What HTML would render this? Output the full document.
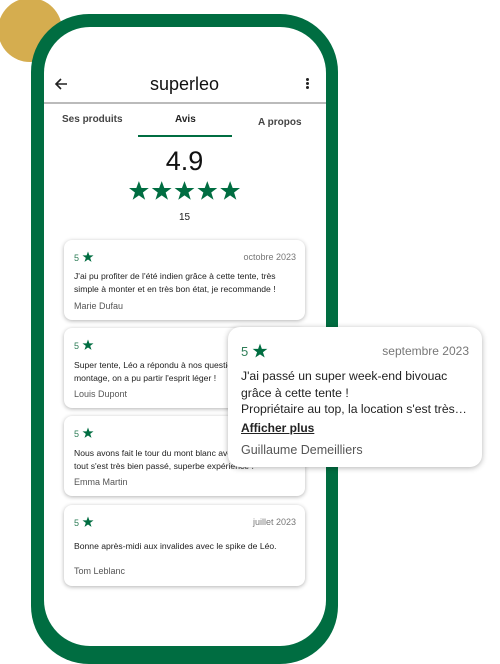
<!DOCTYPE html>
<html><head><meta charset="utf-8"><style>
*{margin:0;padding:0;box-sizing:border-box}
body{width:500px;height:664px;overflow:hidden;background:#fff;font-family:"Liberation Sans",Arial,sans-serif;position:relative}
.a{position:absolute}
.gold{left:-2px;top:-2px;width:64px;height:64px;border-radius:50%;background:#d5ad4f}
.phone{left:31px;top:14px;width:307px;height:650px;border-radius:58px;background:#006d41}
.screen{left:44px;top:27px;width:282px;height:619px;border-radius:46px;background:#fff;overflow:hidden}
.card{background:#fff;border-radius:8px;box-shadow:0 1px 4px rgba(0,0,0,.3);left:64px;width:241px;height:80px}
.r{font-size:9px;color:#2e7d57}
.d{font-size:9px;color:#777;right:9px;top:12px}
.t{font-size:8.6px;color:#222;line-height:13px;left:10px;white-space:nowrap}
.n{font-size:9px;color:#555;left:10px}
svg.s{vertical-align:-2px}
</style></head><body>
<div class="a gold"></div>
<div class="a phone"></div>
<div class="a screen"></div>
<svg class="a" style="left:54px;top:77px" width="14" height="14" viewBox="0 0 14 14"><path d="M13 7H2M7 2L2 7l5 5" stroke="#222" stroke-width="1.6" fill="none"/></svg>
<div class="a" style="left:0;width:369px;text-align:center;top:74px;font-size:18px;color:#111">superleo</div>
<div class="a" style="left:306px;top:78px;width:3px;height:3px;border-radius:50%;background:#222;box-shadow:0 4px 0 #222,0 8px 0 #222"></div>
<div class="a" style="left:44px;top:102px;width:282px;height:2px;background:#bbb"></div>
<div class="a" style="left:62px;top:114px;font-size:10px;font-weight:bold;color:#444">Ses produits</div>
<div class="a" style="left:175px;top:114px;font-size:10px;font-weight:bold;color:#222">Avis</div>
<div class="a" style="left:258px;top:117px;font-size:10px;font-weight:bold;color:#444">A propos</div>
<div class="a" style="left:138px;top:135px;width:94px;height:2px;background:#006d41"></div>
<div class="a" style="left:0;width:369px;text-align:center;top:146px;font-size:27px;color:#111">4.9</div>
<div class="a" style="left:128px;top:180px">
<svg width="114" height="23" viewBox="0 0 115 23"><g fill="#006d41"><path id="st" d="M11 1l2.6 7h7.4l-6 4.5 2.3 7.3L11 15.4 4.7 19.8 7 12.5 1 8h7.4z"/><use href="#st" x="23"/><use href="#st" x="46"/><use href="#st" x="69"/><use href="#st" x="92"/></g></svg></div>
<div class="a" style="left:0;width:369px;text-align:center;top:212px;font-size:10px;color:#222">15</div>

<svg width="0" height="0" style="position:absolute"><defs><path id="ss" d="M6 .5l1.4 3.9h4.1L8.2 6.9l1.3 4L6 8.5 2.5 10.9l1.3-4L.5 4.4h4.1z"/></defs></svg>

<div class="a card" style="top:240px;height:80px">
<div class="a r" style="left:10px;top:11px">5 <svg class="s" width="12" height="12"><use href="#ss" fill="#006d41"/></svg></div>
<div class="a d">octobre 2023</div>
<div class="a t" style="top:30px">J'ai pu profiter de l'été indien grâce à cette tente, très<br>simple à monter et en très bon état, je recommande !</div>
<div class="a n" style="top:61px">Marie Dufau</div></div>

<div class="a card" style="top:328px;height:80px">
<div class="a r" style="left:10px;top:11px">5 <svg class="s" width="12" height="12"><use href="#ss" fill="#006d41"/></svg></div>
<div class="a t" style="top:31px">Super tente, Léo a répondu à nos questions sur le<br>montage, on a pu partir l'esprit léger !</div>
<div class="a n" style="top:61px">Louis Dupont</div></div>

<div class="a card" style="top:416px;height:80px">
<div class="a r" style="left:10px;top:11px">5 <svg class="s" width="12" height="12"><use href="#ss" fill="#006d41"/></svg></div>
<div class="a t" style="top:31px">Nous avons fait le tour du mont blanc avec cette tente,<br>tout s'est très bien passé, superbe expérience !</div>
<div class="a n" style="top:61px">Emma Martin</div></div>

<div class="a card" style="top:505px;height:81px">
<div class="a r" style="left:10px;top:11px">5 <svg class="s" width="12" height="12"><use href="#ss" fill="#006d41"/></svg></div>
<div class="a d">juillet 2023</div>
<div class="a t" style="top:35px">Bonne après-midi aux invalides avec le spike de Léo.</div>
<div class="a n" style="top:61px">Tom Leblanc</div></div>

<div class="a" style="left:228px;top:327px;width:254px;height:140px;background:#fff;border-radius:12px;box-shadow:0 1px 6px rgba(0,0,0,.3)">
<div class="a" style="left:13px;top:16px;font-size:13px;color:#2e7d57">5 <svg style="vertical-align:-3px" width="16" height="16" viewBox="0 0 12 12"><use href="#ss" fill="#006d41"/></svg></div>
<div class="a" style="right:13px;top:17px;font-size:12px;color:#777">septembre 2023</div>
<div class="a" style="left:13px;top:41px;font-size:12.2px;line-height:16.5px;color:#222;white-space:nowrap">J'ai passé un super week-end bivouac<br>grâce à cette tente !<br>Propriétaire au top, la location s'est très…</div>
<div class="a" style="left:13px;top:94px;font-size:12px;font-weight:bold;color:#222;text-decoration:underline">Afficher plus</div>
<div class="a" style="left:13px;top:116px;font-size:12.5px;color:#555">Guillaume Demeilliers</div>
</div>
</body></html>
